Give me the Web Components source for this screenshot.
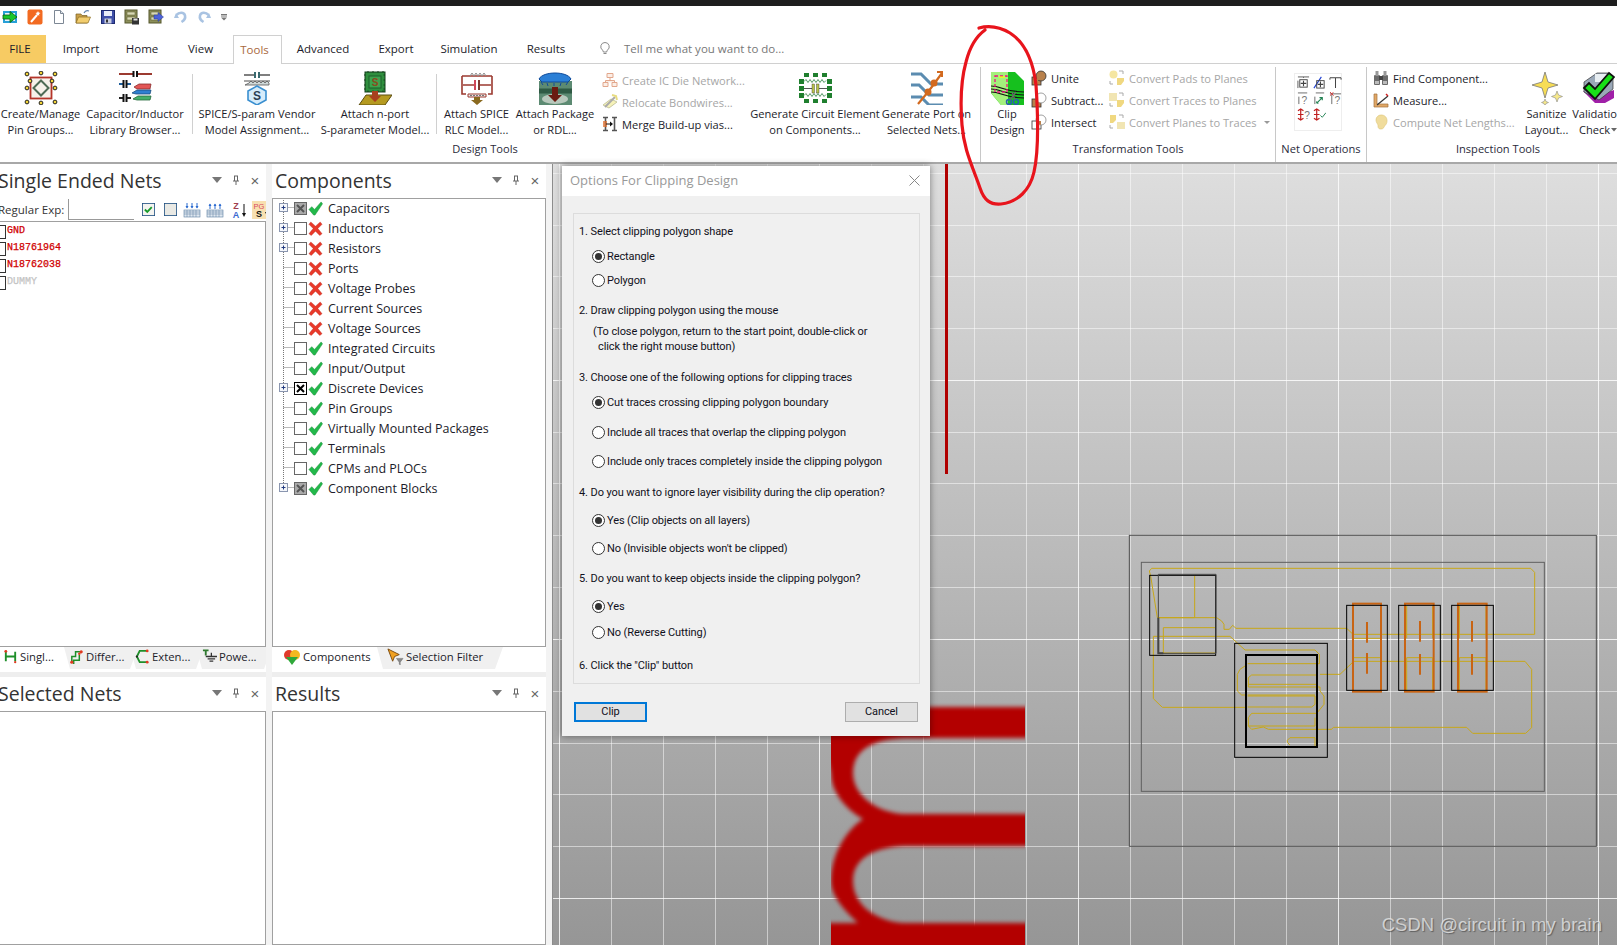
<!DOCTYPE html>
<html>
<head>
<meta charset="utf-8">
<title>Clip Design</title>
<style>
  html, body { margin: 0; height: 100%; overflow: hidden; background: #fff; }
  body { font: 11.5px "Open Sans", "Noto Sans", sans-serif; color: #1c1c2a; width: 1617px; height: 945px; position: relative; }
</style>
</head>
<body>
<cad-app></cad-app>

<script>
// icon drawings, all by hand. key -> [viewBox size, svg body]
const ICONS = {
  exit: [16, '<rect x="1" y="2" width="14" height="12" fill="#28a0d8"/><rect x="3" y="4" width="10" height="8" fill="#e8f4fa"/><path d="M1 6h7V2.500l7 5.500-7 5.500V10H1z" fill="#19c82c" stroke="#0a5a12" stroke-width=".8"/>'],
  wand: [16, '<rect x=".5" y=".5" width="15" height="15" rx="2" fill="#f26a21"/><path d="M4 13l6-7" stroke="#fff" stroke-width="2"/><path d="M11 2l.7 1.6L13.5 4l-1.5 1 .3 1.8L11 6l-1.5.8.3-1.8L8.500 4l1.800-.4z" fill="#fff"/>'],
  newdoc: [16, '<path d="M3.500 1.500h6l3 3v10h-9z" fill="#fff" stroke="#7c8794"/><path d="M9.500 1.500v3h3" fill="#dfe6ee" stroke="#7c8794"/>'],
  open: [16, '<path d="M1 14V5h5l1 1.500h5V14z" fill="#c9a04a" stroke="#7a6020" stroke-width=".7"/><path d="M1 14l2.500-6h12L13 14z" fill="#f2cd6e" stroke="#8a6c20" stroke-width=".7"/><path d="M9 4c1-2 3-3 5-2" fill="none" stroke="#5f7fa8" stroke-width="1.200"/>'],
  save: [16, '<rect x="1.500" y="1.500" width="13" height="13" fill="#3f4fa8" stroke="#1d2a70"/><rect x="4" y="2" width="8" height="5" fill="#e8ecf8"/><rect x="4.500" y="9.500" width="7" height="5" fill="#c8cde0"/><rect x="6" y="10.500" width="2" height="3" fill="#333"/>'],
  saveas: [16, '<rect x="1" y="1" width="12" height="13" fill="#8c8f5a" stroke="#55562c"/><rect x="3" y="3" width="8" height="3" fill="#d8d9b4" stroke="#55562c" stroke-width=".5"/><rect x="3" y="8" width="8" height="3" fill="#d8d9b4" stroke="#55562c" stroke-width=".5"/><rect x="8" y="9" width="7" height="6.500" fill="#333"/><rect x="9.500" y="9.500" width="4" height="2" fill="#ddd"/>'],
  importdb: [16, '<rect x="1" y="1" width="12" height="13" fill="#8c8f5a" stroke="#55562c"/><rect x="3" y="3" width="8" height="3" fill="#d8d9b4" stroke="#55562c" stroke-width=".5"/><rect x="3" y="8" width="8" height="3" fill="#d8d9b4" stroke="#55562c" stroke-width=".5"/><path d="M6 6h4V3.500L15.500 8 10 12.500V10H6z" fill="#4c62d8" stroke="#2a3a90" stroke-width=".5"/>'],
  undo: [16, '<path d="M4 4l-2 5 5 0z" fill="#a9c3e2"/><path d="M4.500 6C7 3 12 3 13 6.500c.6 2.500-1 5-3.500 6.500" fill="none" stroke="#a9c3e2" stroke-width="2.600"/>'],
  redo: [16, '<path d="M12 4l2 5-5 0z" fill="#a9c3e2"/><path d="M11.500 6C9 3 4 3 3 6.500c-.6 2.500 1 5 3.500 6.500" fill="none" stroke="#a9c3e2" stroke-width="2.600"/>'],
  more: [8, '<path d="M1 1.500h6M1 3h6" stroke="#777"/><path d="M1 4.500h6L4 7.500z" fill="#777"/>'],
  bulb: [14, '<path d="M7 1.500a4.200 4.200 0 0 0-2.500 7.600c.5.5.8 1.100.8 1.900h3.400c0-.8.3-1.400.8-1.900A4.200 4.200 0 0 0 7 1.500z" fill="#fff" stroke="#8a8a8a"/><path d="M5.500 12.500h3" stroke="#8a8a8a"/>'],

  pins: [34, '<rect x="6.500" y="6.500" width="21" height="21" fill="#f7f1ea" stroke="#b5352a" stroke-width="1.800"/><path d="M17 9.500L24.500 17 17 24.500 9.500 17z" fill="none" stroke="#4f6b55" stroke-width="2"/>' +
    [[3,3],[17,2],[31,3],[3,17],[31,17],[3,31],[17,32],[31,31],[6,10],[28,10]].map(p => `<circle cx="${p[0]}" cy="${p[1]}" r="1.900" fill="#f3d437" stroke="#222" stroke-width="1"/>`).join('')],
  capbooks: [34, '<path d="M1 3h14M20 3h14" stroke="#9c3a30" stroke-width="2"/><path d="M15.500 0v6M19 0v6" stroke="#111" stroke-width="2"/><path d="M1 13h4M9 13h4" stroke="#1f5f9c" stroke-width="2"/><path d="M5.500 9v8M8.500 9v8" stroke="#111" stroke-width="2"/><path d="M1 27h4M9 27h4" stroke="#222" stroke-width="2"/><path d="M5.500 23v8M8.500 23v8" stroke="#111" stroke-width="2"/><path d="M16 16l5-3h12l-1 5H19z" fill="#e25656" stroke="#8c2f2f" stroke-width=".8"/><path d="M14 22l5-3h14l-1 4H18z" fill="#2f7fd0" stroke="#1b4c80" stroke-width=".8"/><path d="M15 28l5-3h13l-1 4H19z" fill="#46b06a" stroke="#276a3d" stroke-width=".8"/>'],
  spice: [34, '<path d="M4 4h10M20 4h10" stroke="#555" stroke-width="1.500"/><rect x="14" y="1" width="2" height="6" fill="#3a6a70"/><rect x="18" y="1" width="2" height="6" fill="#3a6a70"/><path d="M4 10h26" stroke="#888" stroke-width="1.500"/><path d="M5 14h24v-2l-2-2-2 2-2-2-2 2-2-2-2 2-2-2-2 2-2-2-2 2z" fill="#cfd8d8" stroke="#555" stroke-width=".8"/><path d="M17 15l9 5v9l-9 5-9-5v-9z" fill="#d6ecfb" stroke="#3a8fd0" stroke-width="1.600"/><text x="17" y="29" text-anchor="middle" font-family="Liberation Sans" font-weight="700" font-size="12" fill="#2a3f55">S</text>'],
  nport: [34, '<rect x="7" y="1" width="20" height="20" fill="#2f8f3e" stroke="#123f1a"/><path d="M6 4h22M6 9h22M6 14h22M6 18h22M10 0v22M15 0v22M20 0v22M25 0v22" stroke="#123f1a" stroke-width="1" stroke-dasharray="1.500 18"/><rect x="11" y="5" width="12" height="12" fill="#3da34d" stroke="#1d5f2a"/><text x="17" y="15" text-anchor="middle" font-family="Liberation Sans" font-weight="700" font-size="10" fill="#8a4a20">S</text><path d="M8 24h26l-7 10H1z" fill="#b59a20" stroke="#5c4e10"/><path d="M14 20h6v5h3l-6 6-6-6h3z" fill="#a8401e"/>'],
  rlc: [34, '<path d="M2 5h30M2 5v18h4M32 5v18h-4M3 14h11M20 14h11" fill="none" stroke="#9c3a30" stroke-width="1.600"/><path d="M10 5l2-3 2 3 2-3 2 3 2-3 2 3 2-3 2 3" fill="none" stroke="#8c8c8c"/><rect x="14" y="9" width="2" height="10" fill="#d0485a"/><rect x="18" y="9" width="2" height="10" fill="#7c3a30"/><path d="M8 23h18v3H8z" fill="#eee" stroke="#9c3a30"/><path d="M10 24.500h14" stroke="#777" stroke-dasharray="2 1"/><path d="M14 26h6v3h3l-6 5-6-5h3z" fill="#8a6a20"/>'],
  pack: [34, '<rect x="1" y="10" width="33" height="24" fill="#5c8a72"/><path d="M1 20h33" stroke="#2f5a44" stroke-width="5"/><ellipse cx="17" cy="28" rx="13" ry="5" fill="#b8c8bc"/><path d="M1 8c4-8 28-8 32 0l-3 3H4z" fill="#2b7fd6" stroke="#0e4a9a"/><path d="M3 11l2 3M9 12l1 3M16 12v3M23 12l-1 3M30 11l-2 3" stroke="#0e4a9a"/><path d="M14 16h6v8h4l-7 7-7-7h4z" fill="#6a1a10"/>'],
  circuit: [34, '<path d="M6 2h5v4H6zM15 2h5v4h-5zM24 2h5v4h-5zM6 28h5v4H6zM15 28h5v4h-5zM24 28h5v4h-5z" fill="#1f7f2e"/><rect x="1" y="8" width="5" height="5" fill="#1f7f2e"/><rect x="29" y="8" width="5" height="5" fill="#1f7f2e"/><rect x="1" y="15" width="5" height="5" fill="#1f7f2e"/><rect x="29" y="15" width="5" height="5" fill="#1f7f2e"/><rect x="1" y="22" width="5" height="5" fill="#1f7f2e"/><rect x="29" y="22" width="5" height="5" fill="#1f7f2e"/><path d="M6 10.500l2-2 2 3 2-3 2 3 2-3 2 3 2-3 2 3 2-3 2 3 2-2M6 24.500l2-2 2 3 2-3 2 3 2-3 2 3 2-3 2 3 2-3 2 3 2-2" fill="none" stroke="#596"/><path d="M6 17.500h8M21 17.500h8" stroke="#555"/><rect x="14" y="13" width="2.500" height="9" fill="#b9c54a" stroke="#333" stroke-width=".4"/><rect x="18.500" y="13" width="2.500" height="9" fill="#b9c54a" stroke="#333" stroke-width=".4"/>'],
  portgen: [34, '<path d="M1 3h10l10 10h12M1 14h8l10 10h14M1 26h10l8 8h14" fill="none" stroke="#5b8cb0" stroke-width="3"/><path d="M8 33l10-12 6-8 8-11" fill="none" stroke="#d2691e" stroke-width="2.200"/><circle cx="18" cy="21" r="3.500" fill="#d2691e"/><circle cx="24" cy="12" r="3.500" fill="#d2691e"/><path d="M27 1h5v5" fill="none" stroke="#d2691e" stroke-width="2"/>'],
  clip: [34, '<path d="M1 1h24l9 9v24H11L1 22z" fill="#16c01e"/><path d="M1 1h17v33h-7L1 22z" fill="#a4f07c"/><path d="M1 15c10 0 14 6 33 6M1 18c10 0 14 6 33 6M1 21c10 0 14 6 33 6" fill="none" stroke="#111" stroke-width="1.200"/><rect x="5" y="5" width="12" height="16" fill="none" stroke="#ee1080" stroke-width="1.300" stroke-dasharray="3 2"/><path d="M9 6h6" stroke="#ff0" stroke-width="1.200"/><circle cx="19" cy="31" r="2.500" fill="none" stroke="#2b5bb0" stroke-width="1.500"/><circle cx="26" cy="31" r="2.500" fill="none" stroke="#2b5bb0" stroke-width="1.500"/><path d="M20 29l6-8M25 29l-3-8" stroke="#666" stroke-width="1.300"/>'],

  ic: [16, '<path d="M5 1.500h6v4H5zM1 10.500h5v4H1zM10 10.500h5v4h-5zM8 5.500v3M3.500 10.500v-2h9v2" fill="#fbeee6" stroke="#e2a78c"/>'],
  bond: [16, '<path d="M1 11l6 3 8-6-6-3z" fill="#f6f2b8" stroke="#c8c8a0"/><path d="M3 13l10-10" stroke="#aaa" stroke-width="2"/><path d="M10 1l4 1 1 4" fill="none" stroke="#e8dc80" stroke-width="2"/>'],
  merge: [16, '<path d="M1 1.500h5M3.500 1.500v13M1 14.500h5M10 1.500h5M12.500 1.500v13M10 14.500h5" stroke="#555" stroke-width="1.600"/><path d="M1 6h4M1 8h4M1 10h4" stroke="#e07030" stroke-width="1.500"/><path d="M4 8h6" stroke="#111"/><path d="M8 5.500L11 8l-3 2.500z" fill="#111"/>'],
  unite: [16, '<rect x="1" y="7" width="9" height="8" fill="#b8814c" stroke="#333" stroke-width=".8"/><circle cx="10" cy="6" r="5" fill="#b8814c" stroke="#333" stroke-width=".8"/><path d="M5 7.200h6v-3" fill="#b8814c"/><rect x="6" y="5" width="5" height="5" fill="#b8814c"/>'],
  subtract: [16, '<rect x="1" y="7" width="9" height="8" fill="#b8814c" stroke="#333" stroke-width=".8"/><circle cx="10" cy="6" r="5" fill="#fff" stroke="#888" stroke-width=".8"/>'],
  intersect: [16, '<rect x="1" y="7" width="9" height="8" fill="#fff" stroke="#333" stroke-width=".8"/><circle cx="10" cy="6" r="5" fill="#fff" stroke="#888" stroke-width=".8"/><path d="M6 7h4v4a5 5 0 0 1-4-4z" fill="#b8814c"/>'],
  padplane: [16, '<circle cx="4.500" cy="4.500" r="4" fill="#f5e6a0"/><path d="M8 8h7v3l-3 4H8z" fill="#f0d880"/><path d="M10 1h4v3M1 11v3h3" fill="none" stroke="#aaa"/>'],
  traceplane: [16, '<path d="M1 1v8M3 1v8M5 1v8M7 1v8" stroke="#e8d480" stroke-width="1.200"/><path d="M8 8h7v3l-3 4H8z" fill="#f0d880"/><path d="M10 1h4v3M1 11v3h3" fill="none" stroke="#aaa"/>'],
  planetrace: [16, '<path d="M1 1h6v5l-3 3H1z" fill="#f0d880"/><path d="M9 8v7M11 8v7M13 8v7M15 8v7" stroke="#e8d480" stroke-width="1.200"/><path d="M10 1h4v3M1 11v3h3" fill="none" stroke="#aaa"/>'],
  find: [16, '<rect x="1" y="5" width="6" height="10" rx="1" fill="#6b6b6b"/><rect x="9" y="5" width="6" height="10" rx="1" fill="#6b6b6b"/><rect x="2.500" y="1" width="3" height="5" fill="#999"/><rect x="10.500" y="1" width="3" height="5" fill="#999"/><rect x="6" y="6" width="4" height="4" fill="#444"/><rect x="2" y="11" width="4" height="3" fill="#bbb"/><rect x="10" y="11" width="4" height="3" fill="#bbb"/>'],
  measure: [16, '<path d="M1 2v13h14v-3H4V2z" fill="#e0a868" stroke="#a5703a" stroke-width=".7"/><path d="M4 13L15 4" stroke="#333" stroke-width="1.200"/><path d="M13 2l2 2" stroke="#d02020" stroke-width="1.400"/>'],
  lengths: [16, '<path d="M8 1c4 0 6 2.500 6 6 0 2-1 3.500-2 4.500s-1 3.500-4 3.500-3-2-3-3.500C5 10 3 8.500 3 6c0-3 2.500-5 5-5z" fill="#f0dc9c" stroke="#e0c880" stroke-width=".7"/>'],
  sanitize: [34, '<path d="M15 1l3 10 10 3-10 3-3 10-3-10-10-3 10-3z" fill="#f7dd55" stroke="#777" stroke-width=".8"/><path d="M27 20l1.500 4 4 1.500-4 1.500-1.500 4-1.500-4-4-1.500 4-1.500z" fill="#f7e98a" stroke="#888" stroke-width=".6"/><path d="M15 28l1 2.500 2.500 1-2.500 1-1 2.500-1-2.500-2.500-1 2.500-1z" fill="#f7e98a" stroke="#888" stroke-width=".6"/>'],
  validate: [34, '<path d="M2 20l12 12h10l9-5v-8l-9 3z" fill="#a020a8"/><path d="M3 11L16 2h11l5 6v10L18 29 3 21z" fill="#9aa8b8" stroke="#333" stroke-width=".7"/><path d="M14 3h12v8H14z" fill="#e8eef2"/><path d="M3 17l5-5 6 6L28 2l5 4-19 22z" fill="#18e018" stroke="#111" stroke-width="1.800"/>'],

  yes: [16, '<path d="M1 9l3-3 3 3 7-8 1.500 2L7.500 15H6z" fill="#22b84a" stroke="#178a35" stroke-width=".5"/>'],
  no: [16, '<path d="M3 1l5 4.500L13 1l2 2.500L10.500 8l4.500 5.500-2.500 2L8 10.800l-4.500 4.700-2.500-2L5.500 8 1 3.500z" fill="#e8392a" stroke="#b82a1e" stroke-width=".4"/>'],

  chkon: [16, '<rect x=".5" y=".5" width="15" height="15" fill="#f4f4f0" stroke="#1f4f80"/><path d="M3.500 8l3 3 5.500-6" fill="none" stroke="#179a2a" stroke-width="2.200"/>'],
  chkoff: [16, '<rect x=".5" y=".5" width="15" height="15" fill="#e9e9e4" stroke="#1f4f80"/>'],
  gridon: [18, '<rect x="1" y="9" width="16" height="7" fill="#dfe8f0" stroke="#5c7ea0" stroke-width=".6"/><path d="M1 11h16M1 13h16M4 9v7M7 9v7M10 9v7M13 9v7" stroke="#5c7ea0" stroke-width=".5"/><path d="M4 2v5M9 2v5M14 2v5" stroke="#2d6cd0"/><path d="M2.500 5L4 7.500 5.500 5zM7.500 5L9 7.500 10.500 5zM12.500 5L14 7.500 15.500 5z" fill="#2d6cd0"/>'],
  gridoff: [18, '<rect x="1" y="9" width="16" height="7" fill="#dfe8f0" stroke="#5c7ea0" stroke-width=".6"/><path d="M1 11h16M1 13h16M4 9v7M7 9v7M10 9v7M13 9v7" stroke="#5c7ea0" stroke-width=".5"/><path d="M4 3v5M9 3v5M14 3v5" stroke="#2d6cd0"/><path d="M2.500 5L4 2.500 5.500 5zM7.500 5L9 2.500 10.500 5zM12.500 5L14 2.500 15.500 5z" fill="#2d6cd0"/>'],
  sortaz: [18, '<text x="6" y="8" text-anchor="middle" font-family="Liberation Sans" font-weight="700" font-size="9" fill="#a04050">Z</text><text x="6" y="17" text-anchor="middle" font-family="Liberation Sans" font-weight="700" font-size="9" fill="#3a6ad0">A</text><path d="M14 3v11" stroke="#111"/><path d="M12 12l2 4 2-4z" fill="#111"/>'],
  sortpg: [18, '<rect width="18" height="18" fill="#f8e0b0"/><text x="7" y="7.500" text-anchor="middle" font-family="Liberation Sans" font-size="7.500" fill="#d84a60">PG</text><text x="7" y="16" text-anchor="middle" font-family="Liberation Sans" font-weight="700" font-size="9" fill="#111">S</text><path d="M15 3v10" stroke="#111"/><path d="M13 11l2 4 2-4z" fill="#111"/>'],

  tabse: [16, '<path d="M3 3v10M13 3v10M3 8h10" stroke="#1f8f2a" stroke-width="2"/><circle cx="3" cy="2.500" r="1.500" fill="#e03a20"/><circle cx="13" cy="14" r="1.200" fill="#e03a20"/>'],
  tabdiff: [16, '<path d="M3 14V8h4V3h6M5 16v-4h6V6" fill="none" stroke="#1f8f2a" stroke-width="1.600"/><circle cx="3" cy="14" r="1.700" fill="#e03a20"/><circle cx="13" cy="3" r="1.700" fill="#e03a20"/><circle cx="11" cy="5" r="1.300" fill="#e03a20"/>'],
  tabext: [16, '<path d="M13 2H5L2 8l3 6h8" fill="none" stroke="#1f8f2a" stroke-width="2"/><circle cx="13" cy="2" r="1.500" fill="#e03a20"/><circle cx="13" cy="14" r="1.500" fill="#e03a20"/><circle cx="2" cy="8" r="1.200" fill="#222"/>'],
  tabpow: [16, '<path d="M1 1.500h6M4 1v6" stroke="#2f7a2f" stroke-width="2"/><path d="M10 4v4M4 8h12M6 10.500h8M8 13h4" stroke="#333" stroke-width="1.400"/>'],
  tabcomp: [18, '<circle cx="6" cy="7" r="5" fill="#e03a2a"/><circle cx="12" cy="7" r="5" fill="#f5b820"/><path d="M9 17L3 9h12z" fill="#2fa83a"/>'],
  tabsel: [18, '<path d="M1 1l12 6-5 2-2 5z" fill="#f0a020" stroke="#7a4a10"/><path d="M10 11h7l-3 4v3l-1-1v-2z" fill="#888" stroke="#666" stroke-width=".5"/>'],
  pinned: [10, '<path d="M3 1h4M3.500 1v5M6.500 1v5M2 6h6M5 6v4" fill="none" stroke="#666"/>'],
  net1: [14, '<path d="M1 1h12M7 1v1M1 13V5" stroke="#555"/><rect x="3" y="4" width="8" height="8" fill="none" stroke="#444"/><path d="M7 5v6M4 8h6" stroke="#444" stroke-width="1.200"/>'],
  net2: [14, '<path d="M1 13L9 1" stroke="#2040d0" stroke-width="1.200"/><rect x="4" y="5" width="8" height="8" fill="none" stroke="#444"/><path d="M8 6v6M5 9h6" stroke="#444" stroke-width="1.200"/>'],
  net3: [14, '<path d="M1 2h12M7 2v11" fill="none" stroke="#444" stroke-width="1.100"/><path d="M1 2v2M13 2v2" stroke="#444"/>'],
  net4: [14, '<path d="M1 1h10M2 5v8" stroke="#666"/><text x="8" y="13" text-anchor="middle" font-family="Liberation Sans" font-size="11" fill="#777">?</text>'],
  net5: [14, '<path d="M3 1h9M2 5v8" stroke="#666"/><path d="M4 12l6-6M7 6h3v3" fill="none" stroke="#1f8050" stroke-width="1.200"/><path d="M4 10v2h2" fill="none" stroke="#1f8050"/>'],
  net6: [14, '<path d="M1 2h12M3 3v10" stroke="#666"/><path d="M1 0l4 4M5 0L1 4" stroke="#d03030"/><text x="9" y="13" text-anchor="middle" font-family="Liberation Sans" font-size="11" fill="#777">?</text>'],
  net7: [14, '<path d="M4 1v12M1 3l3-2 3 2M1 11l3 2 3-2M1 7h6" fill="none" stroke="#c02020" stroke-width="1.300"/><text x="11" y="12" text-anchor="middle" font-family="Liberation Sans" font-size="11" fill="#777">?</text>'],
  net8: [14, '<path d="M4 1v12M1 3l3-2 3 2M1 11l3 2 3-2M1 7h6" fill="none" stroke="#c02020" stroke-width="1.300"/><path d="M8 8l2 2 4-5" fill="none" stroke="#1f8050"/>']
};

class CadIcon extends HTMLElement {
  connectedCallback() {
    const s = this.getAttribute('size') || 16;
    const ic = ICONS[this.getAttribute('name')];
    this.attachShadow({ mode: 'open' }).innerHTML = `
      <style>:host { display: inline-block; width: ${s}px; height: ${s}px; flex: none; line-height: 0; } svg { display: block; }</style>
      <svg width="${s}" height="${s}" viewBox="0 0 ${ic[0]} ${ic[0]}">${ic[1]}</svg>`;
  }
}
customElements.define('cad-icon', CadIcon);

// quick access bar + tab strip
class CadTitlebar extends HTMLElement {
  connectedCallback() {
    const qat = [['exit',2],['wand',9],['newdoc',8],['open',8],['save',9],['saveas',8],['importdb',8],['undo',8],['redo',9],['more',7]];
    const tabs = [['FILE',46],['Import',70],['Home',52],['View',65],['Tools',49],['Advanced',82],['Export',64],['Simulation',82],['Results',72]];
    this.attachShadow({ mode: 'open' }).innerHTML = `
      <style>
        :host { display: block; }
        .black { height: 6px; background: #1e1e1e; }
        .qat { height: 29px; display: flex; align-items: flex-start; padding-top: 3px; box-sizing: border-box; }
        .qat cad-icon[name=more] { margin-top: 4px; }
        .tabs { height: 28px; display: flex; align-items: stretch; border-bottom: 1px solid #d0d0d0; box-sizing: content-box; }
        .tab { display: flex; align-items: center; justify-content: center; box-sizing: border-box; font-size: 11.5px; padding-bottom: 2px; }
        .file { background: #f7cb63; padding-right: 6px; }
        .on { color: #a9683c; background: #fff; border: 1px solid #d0d0d0; border-bottom: 0; margin-bottom: -1px; padding-right: 6px; }
        .tell { display: flex; align-items: center; margin-left: 16px; color: #777; gap: 12px; padding-bottom: 2px; }
      </style>
      <div class="black"></div>
      <div class="qat">${qat.map(q => `<cad-icon name="${q[0]}" size="${q[0] == 'more' ? 8 : 16}" style="margin-left:${q[1]}px"></cad-icon>`).join('')}</div>
      <div class="tabs">
        ${tabs.map(t => `<div class="tab ${t[0] == 'FILE' ? 'file' : ''} ${t[0] == 'Tools' ? 'on' : ''}" style="width:${t[1]}px">${t[0]}</div>`).join('')}
        <div class="tell"><cad-icon name="bulb" size="14"></cad-icon><span>Tell me what you want to do...</span></div>
      </div>`;
  }
}
customElements.define('cad-titlebar', CadTitlebar);

class RbGroup extends HTMLElement {
  connectedCallback() {
    this.attachShadow({ mode: 'open' }).innerHTML = `
      <style>
        :host { display: flex; flex-direction: column; box-sizing: border-box; flex: none; width: ${this.getAttribute('w')}px; height: 95px; margin-top: 3px; border-right: 1px solid #c8c8c8; }
        :host([last]) { border-right: 0; }
        .main { display: flex; flex: 1; min-height: 0; }
        .label { height: 20px; display: flex; align-items: flex-start; justify-content: center; line-height: 14px; color: #2a2a3a; white-space: nowrap; padding-right: ${this.getAttribute('lp') || 0}px; }
      </style>
      <div class="main"><slot></slot></div>
      <div class="label">${this.getAttribute('label')}</div>`;
  }
}
customElements.define('rb-group', RbGroup);

class RbBig extends HTMLElement {
  connectedCallback() {
    this.attachShadow({ mode: 'open' }).innerHTML = `
      <style>
        :host { display: flex; flex-direction: column; align-items: center; flex: none; width: ${this.getAttribute('w')}px; padding-top: 4px; box-sizing: border-box; }
        .txt { margin-top: 1px; text-align: center; line-height: 16px; white-space: nowrap; }
      </style>
      <cad-icon name="${this.getAttribute('icon')}" size="34"></cad-icon>
      <div class="txt"><slot></slot></div>`;
  }
}
customElements.define('rb-big', RbBig);

class RbSep extends HTMLElement {
  connectedCallback() {
    this.attachShadow({ mode: 'open' }).innerHTML = `
      <style>:host { display: block; flex: none; width: 1px; height: 60px; margin-top: 7px; background: #d0d0d0; }</style>`;
  }
}
customElements.define('rb-sep', RbSep);

class RbCol extends HTMLElement {
  connectedCallback() {
    this.attachShadow({ mode: 'open' }).innerHTML = `
      <style>:host { display: flex; flex-direction: column; flex: none; width: ${this.getAttribute('w')}px; padding: ${this.getAttribute('top') || 3}px 0 0 ${this.getAttribute('pad') || 0}px; box-sizing: border-box; gap: 6px; }</style>
      <slot></slot>`;
  }
}
customElements.define('rb-col', RbCol);

class RbSmall extends HTMLElement {
  connectedCallback() {
    this.attachShadow({ mode: 'open' }).innerHTML = `
      <style>
        :host { display: flex; align-items: center; height: 16px; gap: 4px; white-space: nowrap; }
        :host([off]) { color: #a6a6a6; }
        .arrow { width: 0; height: 0; border: 3px solid transparent; border-top: 3px solid #999; border-bottom: 0; margin-left: 3px; }
      </style>
      <cad-icon name="${this.getAttribute('icon')}" size="16"></cad-icon><span><slot></slot></span>${this.hasAttribute('arrow') ? '<i class="arrow"></i>' : ''}`;
  }
}
customElements.define('rb-small', RbSmall);

class RbNetBox extends HTMLElement {
  connectedCallback() {
    const names = ['net1','net2','net3','net4','net5','net6','net7','net8'];
    this.attachShadow({ mode: 'open' }).innerHTML = `
      <style>
        :host { display: grid; grid-template-columns: repeat(3, 14px); grid-auto-rows: 13px; gap: 3px 2px; align-content: start; padding: 2px 0 0 2px; width: 48px; height: 58px; box-sizing: border-box; margin: 6px 0 0 18px; border: 1px solid #eee; }
      </style>
      ${names.map(n => `<cad-icon name="${n}" size="13"></cad-icon>`).join('')}`;
  }
}
customElements.define('rb-netbox', RbNetBox);

class CadRibbon extends HTMLElement {
  connectedCallback() {
    this.attachShadow({ mode: 'open' }).innerHTML = `
      <style>
        :host { display: flex; height: 100px; box-sizing: border-box; border-bottom: 2px solid #a8a8a8; overflow: hidden; background: #fff; font-size: 11.1px; }
      </style>
      <slot></slot>`;
  }
}
customElements.define('cad-ribbon', CadRibbon);

// dock panel: title with its three little buttons, an optional tool row, a bordered body and optional tabs
class DockPanel extends HTMLElement {
  connectedCallback() {
    this.attachShadow({ mode: 'open' }).innerHTML = `
      <style>
        :host { display: flex; flex-direction: column; min-height: 0; background: #fff; overflow: hidden; }
        .title { flex: none; height: 34px; box-sizing: border-box; padding-bottom: 2px; display: flex; align-items: center; font-size: 19.5px; color: #333; }
        .title span { flex: 1; white-space: nowrap; margin-left: ${this.getAttribute('tx') || 0}px; }
        .btns { display: flex; align-items: center; gap: 9px; padding-right: 6px; }
        .down { width: 0; height: 0; border: 5px solid transparent; border-top: 6px solid #777; border-bottom: 0; }
        .x { font: 15px "Liberation Sans", sans-serif; color: #666; width: 10px; text-align: center; }
        .body { flex: 1; min-height: 0; border: 1px solid #a0a0a0; ${this.hasAttribute('clipleft') ? 'border-left: 0;' : ''} background: #fff; overflow: hidden; }
      </style>
      <div class="title"><span>${this.getAttribute('title')}</span><div class="btns"><i class="down"></i><cad-icon name="pinned" size="10"></cad-icon><div class="x">×</div></div></div>
      <slot name="tools"></slot>
      <div class="body"><slot></slot></div>
      <slot name="tabs"></slot>`;
  }
}
customElements.define('dock-panel', DockPanel);

class DockTabs extends HTMLElement {
  connectedCallback() {
    this.attachShadow({ mode: 'open' }).innerHTML = `
      <style>:host { display: flex; flex: none; height: 25px; background: #fff; align-items: flex-start; }</style>
      <slot></slot>`;
  }
}
customElements.define('dock-tabs', DockTabs);

class DockTab extends HTMLElement {
  connectedCallback() {
    this.attachShadow({ mode: 'open' }).innerHTML = `
      <style>
        :host { display: flex; align-items: center; height: 22px; gap: 2px; flex: none; box-sizing: border-box; width: ${+this.getAttribute('w') + 8}px; margin-right: -8px; padding: 0 0 3px ${this.getAttribute('pl') || 2}px; white-space: nowrap; font-size: 11.3px;
          clip-path: polygon(0 0, 100% 0, calc(100% - 8px) 100%, 6px 100%); }
        :host([grey]) { background: #f0f0f0; }
      </style>
      <cad-icon name="${this.getAttribute('icon')}" size="${this.getAttribute('is') || 15}"></cad-icon><span><slot></slot></span>`;
  }
}
customElements.define('dock-tab', DockTab);

class NetTools extends HTMLElement {
  connectedCallback() {
    const btns = [['chkon',8],['chkoff',9],['gridon',6],['gridoff',5],['sortaz',6],['sortpg',4]];
    this.attachShadow({ mode: 'open' }).innerHTML = `
      <style>
        :host { display: flex; flex: none; height: 23px; align-items: center; white-space: nowrap; }
        .lbl { margin-left: -2px; width: 70px; flex: none; font-size: 11.500px; color: #333; }
        .in { width: 66px; height: 21px; flex: none; box-sizing: border-box; border-left: 1px solid #999; border-bottom: 1px solid #999; }
      </style>
      <span class="lbl">Regular Exp:</span><div class="in"></div>
      ${btns.map(b => `<cad-icon name="${b[0]}" size="${b[0].startsWith('chk') ? 13 : 18}" style="margin-left:${b[1]}px"></cad-icon>`).join('')}`;
  }
}
customElements.define('net-tools', NetTools);

class NetRow extends HTMLElement {
  connectedCallback() {
    this.attachShadow({ mode: 'open' }).innerHTML = `
      <style>
        :host { display: flex; height: 17px; align-items: center; font: 400 10px "Liberation Mono", monospace; -webkit-text-stroke: .25px currentColor; color: ${this.hasAttribute('dim') ? '#c4c4c4' : '#d00000'}; }
        i { width: 12px; height: 12px; border: 1px solid #333; margin: 2px 1px 0 -8px; flex: none; box-sizing: content-box; }
      </style>
      <i></i><slot></slot>`;
  }
}
customElements.define('net-row', NetRow);

class CompRow extends HTMLElement {
  connectedCallback() {
    const chk = this.getAttribute('chk');
    const mark = chk ? `<path d="M3 3l7 7M10 3l-7 7" stroke="${chk == 'x' ? '#000' : '#555'}" stroke-width="2"/>` : '';
    const fill = chk == 'g' ? '#aaa' : '#fff';
    const plus = this.hasAttribute('plus')
      ? '<rect x="6.500" y="5.500" width="8" height="8" fill="#f4f6fa" stroke="#8a96b0"/><path d="M8.500 9.500h4M10.500 7.500v4" stroke="#223a80"/>' : '';
    const v = this.hasAttribute('last') ? 'M10.500 0v10' : 'M10.500 0v20';
    this.attachShadow({ mode: 'open' }).innerHTML = `
      <style>
        :host { display: flex; align-items: center; height: 20px; white-space: nowrap; font-size: 12.500px; }
        svg { flex: none; display: block; }
        span { margin-left: 5px; }
      </style>
      <svg width="21" height="20"><path d="${v}M10.500 9.500h11" fill="none" stroke="#777" stroke-dasharray="1 1"/>${plus}</svg>
      <svg width="13" height="13"><rect x=".5" y=".5" width="12" height="12" fill="${fill}" stroke="${chk == 'x' ? '#000' : '#666'}"/>${mark}</svg>
      <cad-icon name="${this.getAttribute('st')}" size="15" style="margin-left:1px"></cad-icon>
      <span><slot></slot></span>`;
  }
}
customElements.define('comp-row', CompRow);

class ClipStep extends HTMLElement {
  connectedCallback() {
    this.attachShadow({ mode: 'open' }).innerHTML = `
      <style>:host { display: block; height: 14px; line-height: 14px; margin-top: ${this.getAttribute('gap') || 0}px; padding-left: ${this.getAttribute('x') || 5}px; white-space: nowrap; }</style>
      <slot></slot>`;
  }
}
customElements.define('clip-step', ClipStep);

class ClipOption extends HTMLElement {
  connectedCallback() {
    this.attachShadow({ mode: 'open' }).innerHTML = `
      <style>
        :host { display: flex; align-items: center; height: 14px; margin-top: ${this.getAttribute('gap') || 0}px; padding-left: 18px; white-space: nowrap; }
        i { width: 11px; height: 11px; border: 1px solid #333; border-radius: 50%; margin-right: 2px; flex: none; background: #fff; position: relative; }
        i.on::after { content: ''; position: absolute; left: 2px; top: 2px; width: 7px; height: 7px; border-radius: 50%; background: #333; }
      </style>
      <i class="${this.hasAttribute('on') ? 'on' : ''}"></i><slot></slot>`;
  }
}
customElements.define('clip-option', ClipOption);

class ClipDialog extends HTMLElement {
  connectedCallback() {
    this.attachShadow({ mode: 'open' }).innerHTML = `
      <style>
        :host { position: absolute; left: 562px; top: 166px; width: 368px; height: 570px; background: #f0f0f0; box-shadow: 0 0 7px rgba(0,0,0,.45); display: flex; flex-direction: column; color: #101020; font: 11px Roboto, sans-serif; letter-spacing: -.1px; }
        .head { height: 30px; flex: none; background: #fff; display: flex; align-items: center; justify-content: space-between; padding: 0 10px 2px 8px; box-sizing: border-box; color: #999; font: 13px "Open Sans", sans-serif; letter-spacing: 0; }
        .box { margin: 17px 10px 0 11px; height: 471px; flex: none; box-sizing: border-box; border: 1px solid #dcdcdc; padding-top: 11px; }
        .btns { display: flex; justify-content: space-between; margin: 18px 12px 0 12px; }
        .btn { width: 73px; height: 20px; box-sizing: border-box; background: #e1e1e1; border: 1px solid #adadad; text-align: center; line-height: 18px; }
        .def { border: 2px solid #0078d7; line-height: 16px; }
      </style>
      <div class="head"><span>Options For Clipping Design</span><svg width="11" height="11"><path d="M.5.5l10 10M10.500.5l-10 10" stroke="#888"/></svg></div>
      <div class="box"><slot></slot></div>
      <div class="btns"><div class="btn def">Clip</div><div class="btn">Cancel</div></div>`;
  }
}
customElements.define('clip-dialog', ClipDialog);

// the free canvas: everything in the svg is placed by page coordinates
class PcbCanvas extends HTMLElement {
  connectedCallback() {
    let grid = '';
    for (let k = 0; k < 21; k++) {
      const x = Math.round(559 + k * 51.93) + .5;
      grid += `<path d="M${x} 163V945" stroke="#fff" stroke-opacity="${k % 5 == 0 ? .8 : .5}"/>`;
    }
    for (let k = 0; k < 16; k++) {
      const y = Math.round(171.7 + k * 51.8) + .5;
      grid += `<path d="M553 ${y}H1617" stroke="#fff" stroke-opacity="${k % 5 == 4 ? .8 : .5}"/>`;
    }
    this.attachShadow({ mode: 'open' }).innerHTML = `
      <style>
        :host { display: block; background: linear-gradient(#dedede, #969696); overflow: hidden; min-height: 0; }
        svg { display: block; }
      </style>
      <svg width="1064" height="782" viewBox="553 163 1064 782">
        <defs>
          <filter id="b" x="-5%" y="-5%" width="110%" height="110%"><feGaussianBlur stdDeviation="2"/></filter>
          <clipPath id="c"><rect x="831" y="690" width="194" height="260"/></clipPath>
        </defs>
        ${grid}
        <rect x="945" y="163" width="3" height="310" fill="#b00000"/>
        <g clip-path="url(#c)">
          <path filter="url(#b)" fill="#b30000" d="M815 706H1045V737H905C878 738 853 746 853 772C853 795 878 812 905 813H1045V845H905C878 846 853 855 853 880C853 905 878 921 905 922H1045V960H815V922H858C845 910 831 895 831 880C831 855 845 830 863 818C845 808 831 790 831 772Z"/>
        </g>
        <g transform="translate(1120 520) scale(.33333)" fill="none">
          <rect x="28" y="43" width="1401" height="933" stroke="#505050" stroke-width="3"/>
          <rect x="64" y="124" width="1209" height="687" stroke="#606060" stroke-width="3"/>
          <g stroke="#c8a818" stroke-width="3">
            <path d="M92 165L112 290H290L305 300L312 310V325H328L338 313L348 322H680L697 338V352H780"/>
            <path d="M92 165L88 150L95 142H1232L1244 154V340H700"/>
            <path d="M100 346H330L375 387H585L598 400V428H383"/>
            <path d="M100 346V533L127 559H378"/>
            <path d="M600 460H660L697 425V421H1215L1235 445V620L1217 637H1058L1040 619H640L635 625H445L430 618L395 625L385 615V590L395 577H590L600 565L612 550V525L600 510V498H385V470L395 462H590V490H385"/>
            <path d="M383 525H585V550L575 558H383M383 522H585"/>
            <path d="M375 435L360 445L352 460V510L365 522H380"/>
            <path d="M510 672L502 664V658L510 650H585V677"/>
            <path d="M224 165V290H115M130 396V320H285M130 396H285M385 615H585V590"/>
            <path d="M860 255V352M938 255V352M860 510V410H938V510M700 410H780M1018 255V352M1098 255V352M1018 510V410H1098V510"/>
          </g>
          <rect x="699" y="248" width="84" height="264" stroke="#c86414" stroke-width="6"/>
          <rect x="855" y="248" width="86" height="264" stroke="#c86414" stroke-width="6"/>
          <rect x="1014" y="248" width="86" height="264" stroke="#c86414" stroke-width="6"/>
          <path d="M741 303V365M741 396V458M900 300V362M900 399V461M1056 300V362M1056 399V461" stroke="#c86414" stroke-width="6"/>
          <g stroke="#000" stroke-width="3">
            <rect x="680" y="253" width="122" height="255"/>
            <rect x="836" y="253" width="125" height="255"/>
            <rect x="995" y="253" width="125" height="255"/>
            <rect x="344" y="367" width="278" height="342"/>
            <rect x="89" y="163" width="198" height="240"/>
          </g>
          <path d="M115 290V397H288V160H115V290" stroke="#444" stroke-width="3"/>
          <path d="M115 290V397H130" stroke="#444" stroke-width="6"/>
          <rect x="378" y="402" width="213" height="276" stroke="#000" stroke-width="6"/>
        </g>
      </svg>`;
  }
}
customElements.define('pcb-canvas', PcbCanvas);

// hand drawn red ring somebody put round the Clip button
class RedRing extends HTMLElement {
  connectedCallback() {
    this.attachShadow({ mode: 'open' }).innerHTML = `
      <style>:host { position: absolute; left: 0; top: 0; pointer-events: none; }</style>
      <svg width="1617" height="945" style="display:block"><path d="M979 28C990 25 1000 27 1010 33C1024 42 1033 60 1036 85C1038 115 1039 150 1034 172C1030 190 1018 202 1001 204C990 205 984 200 980 188C972 165 964 150 962 125C960 100 961 80 966 62C969 50 974 38 985 30" fill="none" stroke="#e8141c" stroke-width="3.200" stroke-linecap="round"/></svg>`;
  }
}
customElements.define('red-ring', RedRing);

// site watermark, bottom right of the picture
class WaterMark extends HTMLElement {
  connectedCallback() {
    this.attachShadow({ mode: 'open' }).innerHTML = `
      <style>:host { position: absolute; right: 15px; bottom: 9px; font: 18.5px/22px "Liberation Sans", sans-serif; color: rgba(235,235,235,.75); text-shadow: 1px 1px 1px rgba(60,60,60,.6); white-space: nowrap; }</style>
      <slot></slot>`;
  }
}
customElements.define('water-mark', WaterMark);

class CadApp extends HTMLElement {
  connectedCallback() {
    this.attachShadow({ mode: 'open' }).innerHTML = `
      <style>
        :host { display: flex; flex-direction: column; width: 1617px; height: 945px; overflow: hidden; }
        .work { flex: 1; min-height: 0; display: grid; grid-template-columns: 266px 6px 274px 7px 1fr; background: #f3f3f3; }
        .col { display: grid; grid-template-rows: 508px 5px 1fr; min-height: 0; min-width: 0; }
        .strip { background: #eee; }
        .split { background: #f3f3f3; }
      </style>
      <cad-titlebar></cad-titlebar>
      <cad-ribbon>
        <rb-group w="981" label="Design Tools" lp="10">
          <rb-big w="81" icon="pins">Create/Manage<br>Pin Groups...</rb-big>
          <rb-big w="108" icon="capbooks">Capacitor/Inductor<br>Library Browser...</rb-big>
          <rb-sep style="margin-left:3px"></rb-sep>
          <rb-big w="122" icon="spice" style="margin-left:3px">SPICE/S-param Vendor<br>Model Assignment...</rb-big>
          <rb-big w="114" icon="nport">Attach n-port<br>S-parameter Model...</rb-big>
          <rb-sep style="margin-left:4px"></rb-sep>
          <rb-big w="71" icon="rlc" style="margin-left:4px">Attach SPICE<br>RLC Model...</rb-big>
          <rb-big w="86" icon="pack">Attach Package<br>or RDL...</rb-big>
          <rb-col w="152" pad="4" top="5">
            <rb-small icon="ic" off>Create IC Die Network...</rb-small>
            <rb-small icon="bond" off>Relocate Bondwires...</rb-small>
            <rb-small icon="merge">Merge Build-up vias...</rb-small>
          </rb-col>
          <rb-big w="130" icon="circuit">Generate Circuit Element<br>on Components...</rb-big>
          <rb-big w="93" icon="portgen">Generate Port on<br>Selected Nets...</rb-big>
        </rb-group>
        <rb-group w="295" label="Transformation Tools">
          <rb-big w="48" icon="clip" style="margin-left:2px">Clip<br>Design</rb-big>
          <rb-col w="78" pad="0">
            <rb-small icon="unite">Unite</rb-small>
            <rb-small icon="subtract">Subtract...</rb-small>
            <rb-small icon="intersect">Intersect</rb-small>
          </rb-col>
          <rb-col w="160" pad="0">
            <rb-small icon="padplane" off>Convert Pads to Planes</rb-small>
            <rb-small icon="traceplane" off>Convert Traces to Planes</rb-small>
            <rb-small icon="planetrace" off arrow>Convert Planes to Traces</rb-small>
          </rb-col>
        </rb-group>
        <rb-group w="91" label="Net Operations"><rb-netbox></rb-netbox></rb-group>
        <rb-group w="262" label="Inspection Tools" last>
          <rb-col w="154" pad="6">
            <rb-small icon="find">Find Component...</rb-small>
            <rb-small icon="measure">Measure...</rb-small>
            <rb-small icon="lengths" off>Compute Net Lengths...</rb-small>
          </rb-col>
          <rb-big w="51" icon="sanitize">Sanitize<br>Layout...</rb-big>
          <rb-big w="52" icon="validate">Validation<br>Check<svg width="6" height="4" style="margin:0 0 2px 1px"><path d="M0 0h6L3 3.500z" fill="#666"/></svg></rb-big>
        </rb-group>
      </cad-ribbon>
      <div class="work">
        <div class="col">
          <dock-panel title="Single Ended Nets" tx="-2" clipleft>
            <net-tools slot="tools"></net-tools>
            <net-row>GND</net-row>
            <net-row>N18761964</net-row>
            <net-row>N18762038</net-row>
            <net-row dim>DUMMY</net-row>
            <dock-tabs slot="tabs">
              <dock-tab icon="tabse" w="64" pl="3">Singl...</dock-tab>
              <dock-tab icon="tabdiff" w="66" pl="5" grey>Differ...</dock-tab>
              <dock-tab icon="tabext" w="66" pl="5" grey>Exten...</dock-tab>
              <dock-tab icon="tabpow" w="68" pl="6" grey>Powe...</dock-tab>
            </dock-tabs>
          </dock-panel>
          <div class="strip"></div>
          <dock-panel title="Selected Nets" tx="-2" clipleft></dock-panel>
        </div>
        <div class="split"></div>
        <div class="col">
          <dock-panel title="Components" tx="3">
            <comp-row plus chk="g" st="yes" style="margin-top:-1px">Capacitors</comp-row>
            <comp-row plus st="no">Inductors</comp-row>
            <comp-row plus st="no">Resistors</comp-row>
            <comp-row st="no">Ports</comp-row>
            <comp-row st="no">Voltage Probes</comp-row>
            <comp-row st="no">Current Sources</comp-row>
            <comp-row st="no">Voltage Sources</comp-row>
            <comp-row st="yes">Integrated Circuits</comp-row>
            <comp-row st="yes">Input/Output</comp-row>
            <comp-row plus chk="x" st="yes">Discrete Devices</comp-row>
            <comp-row st="yes">Pin Groups</comp-row>
            <comp-row st="yes">Virtually Mounted Packages</comp-row>
            <comp-row st="yes">Terminals</comp-row>
            <comp-row st="yes">CPMs and PLOCs</comp-row>
            <comp-row plus last chk="g" st="yes">Component Blocks</comp-row>
            <dock-tabs slot="tabs">
              <dock-tab icon="tabcomp" w="105" pl="11" is="18">Components</dock-tab>
              <dock-tab icon="tabsel" w="118" pl="10" is="17" grey>Selection Filter</dock-tab>
            </dock-tabs>
          </dock-panel>
          <div class="strip"></div>
          <dock-panel title="Results" tx="3"></dock-panel>
        </div>
        <div class="split" style="border-right:1px solid #8c8c8c"></div>
        <pcb-canvas></pcb-canvas>
      </div>
      <clip-dialog>
        <clip-step gap="0">1. Select clipping polygon shape</clip-step>
        <clip-option on gap="10">Rectangle</clip-option>
        <clip-option gap="10">Polygon</clip-option>
        <clip-step gap="17">2. Draw clipping polygon using the mouse</clip-step>
        <clip-step gap="7" x="19">(To close polygon, return to the start point, double-click or</clip-step>
        <clip-step gap="1" x="24">click the right mouse button)</clip-step>
        <clip-step gap="17">3. Choose one of the following options for clipping traces</clip-step>
        <clip-option on gap="10">Cut traces crossing clipping polygon boundary</clip-option>
        <clip-option gap="16">Include all traces that overlap the clipping polygon</clip-option>
        <clip-option gap="15">Include only traces completely inside the clipping polygon</clip-option>
        <clip-step gap="18">4. Do you want to ignore layer visibility during the clip operation?</clip-step>
        <clip-option on gap="13">Yes (Clip objects on all layers)</clip-option>
        <clip-option gap="14">No (Invisible objects won't be clipped)</clip-option>
        <clip-step gap="17">5. Do you want to keep objects inside the clipping polygon?</clip-step>
        <clip-option on gap="13">Yes</clip-option>
        <clip-option gap="12">No (Reverse Cutting)</clip-option>
        <clip-step gap="20">6. Click the "Clip" button</clip-step>
      </clip-dialog>
      <red-ring></red-ring>
      <water-mark>CSDN @circuit in my brain</water-mark>`;
  }
}
customElements.define('cad-app', CadApp);
</script>
</body>
</html>
